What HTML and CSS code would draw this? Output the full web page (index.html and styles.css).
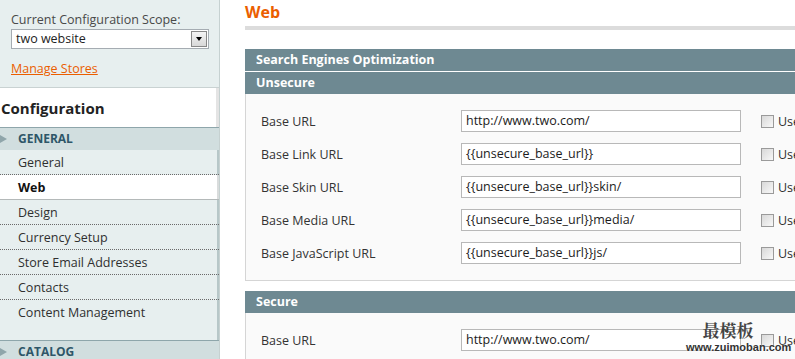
FILE: index.html
```html
<!DOCTYPE html>
<html lang="en">
<head>
    <meta charset="UTF-8">
    <meta name="viewport" content="width=device-width, initial-scale=1.0">
    <title>Configuration / Web</title>
    <link rel="stylesheet" href="styles.css">
</head>
<body>
    <aside class="side">
        <div class="scope">
            <label class="scope-label" for="scope">Current Configuration Scope:</label>
            <div class="select">
                <span class="select-value">two website</span>
                <span class="select-btn"><span class="caret"></span></span>
            </div>
            <a class="manage" href="#">Manage Stores</a>
        </div>
        <h3 class="side-title">Configuration</h3>
        <div class="group-head"><span class="arrow"></span>GENERAL</div>
        <ul class="tabs">
            <li>General</li>
            <li class="active">Web</li>
            <li>Design</li>
            <li>Currency Setup</li>
            <li>Store Email Addresses</li>
            <li>Contacts</li>
            <li class="last">Content Management</li>
        </ul>
        <div class="group-head"><span class="arrow"></span>CATALOG</div>
    </aside>

    <main class="main">
        <h2 class="page-title">Web</h2>

        <section class="fieldset">
            <div class="head">Search Engines Optimization</div>
            <div class="head">Unsecure</div>
            <div class="body">
                <div class="row">
                    <span class="label">Base URL</span>
                    <span class="input">http://www.two.com/</span>
                    <span class="check"></span><span class="use">Use Default</span>
                </div>
                <div class="row">
                    <span class="label">Base Link URL</span>
                    <span class="input">{{unsecure_base_url}}</span>
                    <span class="check"></span><span class="use">Use Default</span>
                </div>
                <div class="row">
                    <span class="label">Base Skin URL</span>
                    <span class="input">{{unsecure_base_url}}skin/</span>
                    <span class="check"></span><span class="use">Use Default</span>
                </div>
                <div class="row">
                    <span class="label">Base Media URL</span>
                    <span class="input">{{unsecure_base_url}}media/</span>
                    <span class="check"></span><span class="use">Use Default</span>
                </div>
                <div class="row">
                    <span class="label">Base JavaScript URL</span>
                    <span class="input">{{unsecure_base_url}}js/</span>
                    <span class="check"></span><span class="use">Use Default</span>
                </div>
            </div>
        </section>

        <section class="fieldset">
            <div class="head">Secure</div>
            <div class="body">
                <div class="row">
                    <span class="label">Base URL</span>
                    <span class="input">http://www.two.com/</span>
                    <span class="check"></span><span class="use">Use Default</span>
                </div>
                <p class="note">Please make sure that Base URL ends with '/' (slash), e.g. http://yourdomain/magento/</p>
            </div>
        </section>
    </main>

    <div class="watermark">
        <span class="wm-cn">最模板</span>
        <span class="wm-url">www.zuimoban.com</span>
    </div>
</body>
</html>
```

FILE: styles.css
```css
html, body {
    margin: 0;
    height: 100%;
    overflow: hidden;
}
body {
    display: flex;
    align-items: flex-start;
    background: #fff;
    font-family: "Open Sans", Arial, sans-serif;
    font-size: 12.5px;
    color: #2f2f2f;
    position: relative;
}

/* sidebar */
.side {
    width: 219px;
    flex: none;
    background: #e7efef;
    border-right: 1px solid #c6d1d1;
}
.scope {
    padding: 11px 10px 0 11px;
    height: 76px;
}
.scope-label {
    display: block;
    line-height: 18px;
    color: #494949;
}
.select {
    display: flex;
    height: 18px;
    border: 1px solid #a5acb2;
    background: #fff;
    width: 196px;
}
.select-value {
    flex: 1;
    padding-left: 4px;
    line-height: 18px;
    color: #222;
}
.select-btn {
    width: 14px;
    margin: 1px;
    border: 1px solid #888;
    background: linear-gradient(#f4f4f4, #d8d8d8);
    display: flex;
    align-items: center;
    justify-content: center;
}
.caret {
    width: 0;
    height: 0;
    border-left: 3px solid transparent;
    border-right: 3px solid transparent;
    border-top: 4px solid #000;
}
.manage {
    display: inline-block;
    margin-top: 11px;
    color: #eb5e00;
    text-decoration: underline;
}
.side-title {
    margin: 0;
    height: 39px;
    line-height: 40px;
    padding-left: 1px;
    background: #fff;
    border-top: 1px solid #c9d2d2;
    box-shadow: inset -3px 0 0 #e4e4e4;
    font-size: 15px;
    font-weight: bold;
    color: #222;
}
.group-head {
    height: 22px;
    line-height: 22px;
    background: #d1dedf;
    border-top: 1px solid #8ea6ab;
    color: #2e5668;
    font-weight: bold;
    font-size: 12px;
    display: flex;
    align-items: center;
}
.arrow {
    width: 0;
    height: 0;
    border-top: 4px solid transparent;
    border-bottom: 4px solid transparent;
    border-left: 7px solid #8fa5aa;
    margin-right: 11px;
}
.tabs {
    list-style: none;
    margin: 0;
    padding: 0 0 16px;
    box-shadow: inset -2px 0 0 #b7c7c8;
}
.tabs li {
    height: 24px;
    line-height: 25px;
    padding-left: 18px;
    border-bottom: 1px dotted #6a6a6a;
}
.tabs li.active {
    background: #fff;
    font-weight: bold;
    color: #111;
    border-bottom: 1px solid #b4b9b9;
    box-shadow: inset -2px 0 0 #d9dcdc;
}
.tabs li.last {
    border-bottom: none;
}

/* main */
.main {
    margin-left: 25px;
    width: 620px;
    flex: none;
}
.page-title {
    margin: 0;
    height: 26px;
    line-height: 24px;
    border-bottom: 4px solid #dcdcdc;
    color: #eb5e00;
    font-size: 16px;
    font-weight: bold;
}
.fieldset {
    margin-top: 19px;
}
.fieldset + .fieldset {
    margin-top: 10px;
}
.head {
    height: 22px;
    line-height: 22px;
    padding-left: 11px;
    background: #6e8992;
    color: #fff;
    font-weight: bold;
}
.head + .head {
    border-top: 1px solid #fff;
}
.body {
    background: #fafafa;
    border: 1px solid #d5d5d5;
    border-top: none;
    padding: 16px 0 16px 15px;
}
.row {
    display: flex;
    align-items: center;
    height: 22px;
    margin-bottom: 11px;
}
.row:last-child {
    margin-bottom: 0;
}
.label {
    width: 200px;
    flex: none;
    color: #333;
}
.input {
    width: 274px;
    height: 20px;
    flex: none;
    line-height: 20px;
    padding-left: 4px;
    border: 1px solid #b8b8b8;
    background: #fff;
    color: #1c1c1c;
    white-space: nowrap;
    overflow: hidden;
}
.check {
    width: 11px;
    height: 11px;
    margin-left: 20px;
    border: 1px solid #9a9a9a;
    background: linear-gradient(135deg, #d8d8d8, #f8f8f8);
    flex: none;
}
.use {
    margin-left: 4px;
    white-space: nowrap;
}
.note {
    margin: 3px 0 0 200px;
    font-size: 12px;
    color: #444;
    white-space: nowrap;
}

/* screenshot watermark */
.watermark {
    position: absolute;
    left: 686px;
    top: 321px;
    width: 102px;
    text-align: center;
    line-height: 1;
}
.wm-cn {
    display: block;
    padding-right: 18px;
    font-family: "Noto Serif CJK SC", "Noto Sans CJK SC", serif;
    font-weight: bold;
    font-size: 17px;
    color: #444;
}
.wm-url {
    display: block;
    margin-top: 4px;
    font-family: "Liberation Sans", Arial, sans-serif;
    font-weight: bold;
    font-size: 11px;
    color: #333;
    text-shadow: 0 0 2px #fff;
}
```
